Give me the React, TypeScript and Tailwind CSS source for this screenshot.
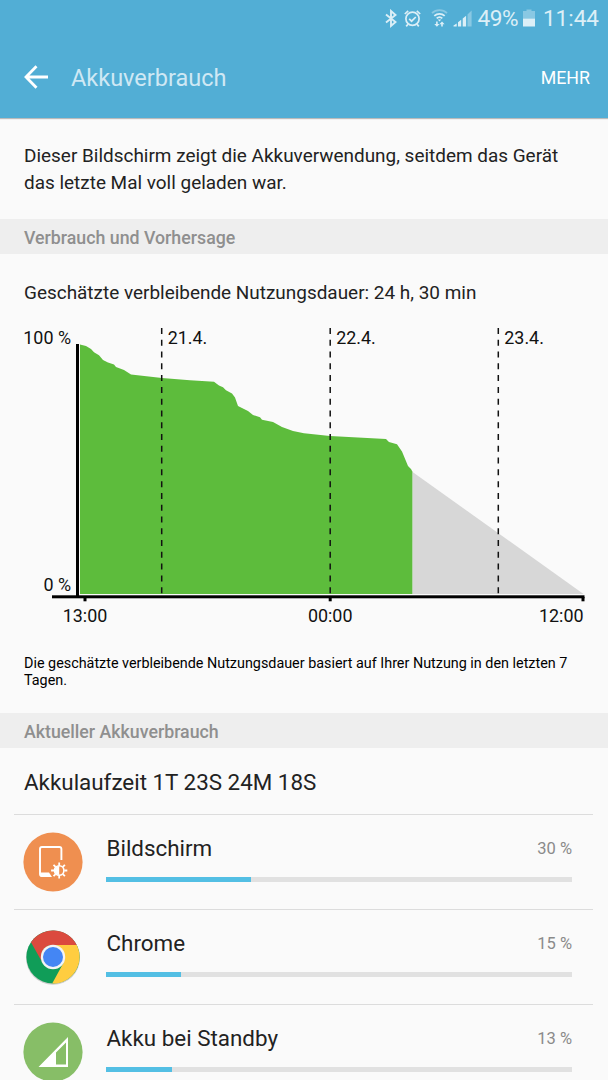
import type { ReactNode } from "react";

interface UsageEntry {
  name: string;
  percent: number;
  bar: number;
  icon: ReactNode;
}

const days = [
  { x: 161.7, label: "21.4." },
  { x: 330.2, label: "22.4." },
  { x: 498.3, label: "23.4." },
];

const usedCurve =
  "80,344.5 86,346 91,349 94,352.3 99,355.3 103,360 108,362.5 114,364.5 116,367 124,370 131,374.6 162,378 190,380.2 214,381.7 219,385.5 223,387.3 226,390.3 232,393.5 235,397.5 238,406 248,411 253,415 260,417.3 262,419.7 273,422 282,427 293,431 304,433.3 330,436 386,439 389,442 397,444.3 402,451.5 408,466 411,469 412.6,472";

function StatusBar() {
  return (
    <div className="flex h-[37px] items-center justify-end pr-[9px] text-[#dceff7]">
      <svg className="h-[20px] w-[12px]" viewBox="0 0 12 20" fill="none" stroke="currentColor" strokeWidth="1.9">
        <path d="M1 5.5l9.5 7.5L6 17V2l4.5 4L1 13.5" />
      </svg>
      <svg className="ml-[7px] h-[20px] w-[17px]" viewBox="0 0 17 20" fill="none" stroke="currentColor" strokeWidth="1.7">
        <circle cx="8.5" cy="9.8" r="6.6" />
        <path d="M5.2 9.8l2.4 2.4 4.2-4.2M0.8 5l3.4-3.2M16.2 5l-3.4-3.2M4 15.2l-1.8 2.2M13 15.2l1.8 2.2" />
      </svg>
      <svg className="ml-[10px] h-[20px] w-[17px]" viewBox="0 0 17 20" fill="none" stroke="currentColor" strokeWidth="1.8">
        <path d="M1 4.2c4.2-4 10.8-4 15 0" opacity="0.4" />
        <path d="M3.3 6.9c3-2.8 7.4-2.8 10.4 0M5.7 9.4c1.7-1.6 3.9-1.6 5.6 0" />
        <path d="M8.5 12.4l-1.8-1.9h3.6zM5.9 17.8l-2.6-2.9h1.8v-2.3h1.6v2.3h1.8zM11 12.4l-2.6 2.9h1.8v2.3h1.6v-2.3h1.8z" fill="currentColor" stroke="none" />
      </svg>
      <svg className="ml-[5px] h-[20px] w-[19px]" viewBox="0 0 19 20" fill="currentColor">
        <path d="M0.5 17.5v-0.9l3.2-2.2v3.1zM5 17.5v-4.2l3.2-2.6v6.8zM9.7 17.5v-8l3.4-2.8v10.8z" />
        <path d="M14.5 17.5V5.5L18.6 1.5v16z" opacity="0.4" />
      </svg>
      <span className="ml-[6px] pt-px text-[22.6px] tracking-[-0.5px]">49%</span>
      <svg className="ml-[5px] h-[20px] w-[12px]" viewBox="0 0 12 20" fill="currentColor">
        <path d="M0 2h3.5V0.5h5V2H12v7.5H0z" opacity="0.4" />
        <path d="M0 9.5h12v8H0z" />
      </svg>
      <span className="ml-[8px] text-[22.5px]">11:44</span>
    </div>
  );
}

function SectionHeader({ title }: { title: string }) {
  return (
    <h2 className="flex h-[35px] shrink-0 items-center bg-[#eeeeee] px-6 pt-[3px] text-[17.75px] font-medium text-[#8f8f8f]">
      {title}
    </h2>
  );
}

function BatteryChart() {
  return (
    <svg className="block h-[312px] w-full" viewBox="0 318 608 312" fontSize="17.9" fill="#111">
      <polygon points={`80,594 ${usedCurve} 412.6,594`} fill="#5dbc3c" />
      <polygon points="412.6,472 583.5,594 412.6,594" fill="#d7d7d7" />
      {days.map((day) => (
        <g key={day.label}>
          <line x1={day.x} x2={day.x} y1="328" y2="594" stroke="#111" strokeWidth="1.5" strokeDasharray="6 5.78" />
          <text x={day.x + 6} y="343.8">{day.label}</text>
        </g>
      ))}
      <g fill="#000">
        <rect x="76" y="344" width="3" height="252" />
        <rect x="52" y="595.3" width="532.5" height="3" />
        <rect x="83.5" y="597" width="3" height="4.3" />
        <rect x="328.7" y="597" width="3" height="4.3" />
        <rect x="581.5" y="597" width="3" height="4.3" />
      </g>
      <text x="71" y="343.8" textAnchor="end">100 %</text>
      <text x="71" y="591" textAnchor="end">0 %</text>
      <text x="85" y="622" textAnchor="middle">13:00</text>
      <text x="330.2" y="622" textAnchor="middle">00:00</text>
      <text x="583.5" y="622" textAnchor="end">12:00</text>
    </svg>
  );
}

function ScreenIcon() {
  return (
    <svg className="size-[60px]" viewBox="0 0 60 60" fill="none" stroke="#fff">
      <circle cx="30" cy="30" r="29.6" fill="#ef8f50" stroke="none" />
      <path d="M38.4 28V17a2 2 0 0 0-2-2H19a2 2 0 0 0-2 2V42a2 2 0 0 0 2 2h8" strokeWidth="1.9" />
      <path d="M17 40.5h9l3 4.4H19a2 2 0 0 1-2-2z" fill="#fff" stroke="none" />
      <circle cx="36.2" cy="38.5" r="4.7" strokeWidth="1.6" />
      <path d="M36.2 34a4.5 4.5 0 0 0 0 9z" fill="#fff" stroke="none" />
      <path
        d="M36.2 33.4v-3M36.2 43.6v3M31.1 38.5h-3M41.3 38.5h3M32.6 34.9l-2.1-2.1M39.8 34.9l2.1-2.1M32.6 42.1l-2.1 2.1M39.8 42.1l2.1 2.1"
        strokeWidth="1.8"
      />
    </svg>
  );
}

function ChromeIcon() {
  return (
    <svg className="size-[60px]" viewBox="0 0 60 60">
      <circle cx="30" cy="30.8" r="27" fill="#000" opacity="0.18" />
      <circle cx="30" cy="30" r="26.6" fill="#109d58" />
      <path d="M30 18H53.7A26.6 26.6 0 0 1 29.2 56.6L40.4 36z" fill="#ffcd40" />
      <path d="M53.7 18H30A12 12 0 0 0 19.6 36L8 15.2A26.6 26.6 0 0 1 53.7 18z" fill="#db4a3e" />
      <circle cx="30" cy="30" r="12.2" fill="#f4f4f4" />
      <circle cx="30" cy="30" r="10" fill="#4486f4" />
    </svg>
  );
}

function StandbyIcon() {
  return (
    <svg className="size-[60px]" viewBox="0 0 60 60">
      <circle cx="30" cy="30" r="29.6" fill="#87be67" />
      <path d="M45 15V45H15.5zM43 20.5L33 30.4V42.5h10z" fill="#fff" fillRule="evenodd" />
    </svg>
  );
}

const entries: UsageEntry[] = [
  { name: "Bildschirm", percent: 30, bar: 31.1, icon: <ScreenIcon /> },
  { name: "Chrome", percent: 15, bar: 16.1, icon: <ChromeIcon /> },
  { name: "Akku bei Standby", percent: 13, bar: 14.1, icon: <StandbyIcon /> },
];

function UsageRow({ entry }: { entry: UsageEntry }) {
  return (
    <li className="mr-[15px] ml-[14px] flex h-[95px] shrink-0 border-t border-[#dcdcdc] pr-[21px] pl-[9px]">
      <div className="mt-[17px] shrink-0">{entry.icon}</div>
      <div className="ml-[23px] flex-1 pt-[19px]">
        <div className="flex h-[30px] items-center justify-between">
          <span className="pl-[0.5px] text-[22.4px] text-[#222]">{entry.name}</span>
          <span className="text-[16.5px] text-[#8a8a8a]">{entry.percent} %</span>
        </div>
        <div className="mt-[13px] h-[5px] bg-[#e1e1e1]">
          <div className="h-full bg-[#53bfe4]" style={{ width: `${entry.bar}%` }} />
        </div>
      </div>
    </li>
  );
}

export default function App() {
  return (
    <div className="flex h-[1080px] w-[608px] flex-col overflow-hidden bg-[#fafafa] font-['Roboto',sans-serif] text-[#222]">
      <header className="h-[118px] shrink-0 bg-[#52aed5] shadow-[0_1px_1px_rgba(0,0,0,0.25)]">
        <StatusBar />
        <div className="flex h-[81px] items-center pr-[18px] pl-6">
          <svg className="mb-[2px] h-[24px] w-[24px]" viewBox="0 0 24 24" fill="none" stroke="#fff" strokeWidth="2.8">
            <path d="M12.5 1.2L2 12l10.5 10.8M2 12h22" />
          </svg>
          <h1 className="ml-[23px] flex-1 pt-[2px] text-[23.5px] text-[#cfe8f4]">Akkuverbrauch</h1>
          <button className="pt-px text-[17.8px] text-white">MEHR</button>
        </div>
      </header>

      <p className="h-[101px] shrink-0 px-6 pt-[24px] text-[18.95px] leading-[27px]">
        Dieser Bildschirm zeigt die Akkuverwendung, seitdem das Gerät
        <br />
        das letzte Mal voll geladen war.
      </p>

      <SectionHeader title="Verbrauch und Vorhersage" />

      <section className="h-[459px] shrink-0">
        <p className="flex h-[64px] items-center px-6 pt-[15px] text-[18.95px]">
          Geschätzte verbleibende Nutzungsdauer: 24 h, 30 min
        </p>
        <BatteryChart />
        <p className="px-6 pt-[25px] text-[14.36px] leading-[17px] text-black">
          Die geschätzte verbleibende Nutzungsdauer basiert auf Ihrer Nutzung in den letzten 7
          <br />
          Tagen.
        </p>
      </section>

      <SectionHeader title="Aktueller Akkuverbrauch" />

      <p className="flex h-[66px] shrink-0 items-center px-6 pt-[4px] text-[22.4px]">Akkulaufzeit 1T 23S 24M 18S</p>

      <ul>
        {entries.map((entry) => (
          <UsageRow key={entry.name} entry={entry} />
        ))}
      </ul>
    </div>
  );
}
